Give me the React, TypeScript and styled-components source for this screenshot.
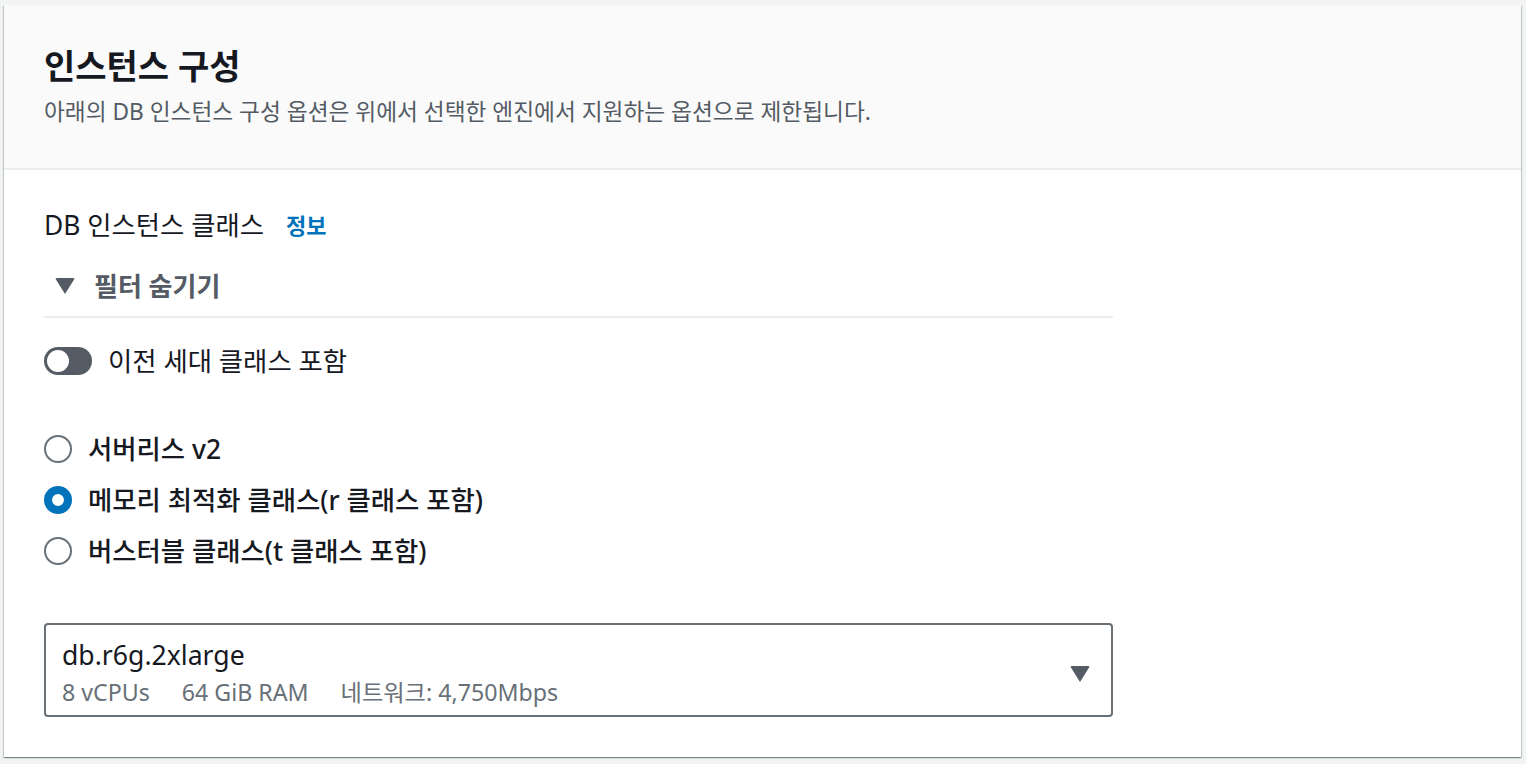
import styled, { createGlobalStyle } from "styled-components";

const GlobalStyle = createGlobalStyle`
  html, body {
    margin: 0;
    padding: 0;
    background: #f2f3f3;
  }
  body {
    font-family: "Noto Sans", "Noto Sans CJK KR", sans-serif;
    color: #16191f;
  }
`;

const Page = styled.div`
  padding: 5px 5px 6px 4px;
`;

const Card = styled.section`
  background: #ffffff;
  box-shadow: 0 1px 1px 0 rgba(0, 28, 36, 0.3), 1px 1px 1px 0 rgba(0, 28, 36, 0.15),
    -1px 1px 1px 0 rgba(0, 28, 36, 0.15);
`;

const Header = styled.header`
  background: #fafafa;
  border-bottom: 2px solid #eaeded;
  padding: 41px 40px 41px;
`;

const Title = styled.h2`
  margin: 0;
  font-size: 34px;
  line-height: 40px;
  font-weight: 700;
  color: #16191f;
`;

const Description = styled.p`
  margin: 11px 0 0;
  font-size: 22.7px;
  line-height: 30px;
  color: #545b64;
`;

const Body = styled.div`
  padding: 40px 40px 40px;
`;

const Column = styled.div`
  width: 1069px;
  display: flex;
  flex-direction: column;
`;

const FieldLabel = styled.div`
  display: flex;
  align-items: center;
  gap: 22px;
  font-size: 26.4px;
  line-height: 30px;
`;

const InfoLink = styled.a`
  color: #0073bb;
  font-weight: 700;
  font-size: 22px;
  text-decoration: none;
`;

const FilterToggle = styled.div`
  margin-top: 31px;
  display: flex;
  align-items: center;
  gap: 19px;
  padding-left: 11px;
  font-size: 26px;
  line-height: 30px;
  font-weight: 700;
  color: #545b64;
`;

const Caret = styled.span<{ $size: number }>`
  width: 0;
  height: 0;
  border-left: ${(p) => p.$size / 2}px solid transparent;
  border-right: ${(p) => p.$size / 2}px solid transparent;
  border-top: ${(p) => p.$size * 0.8}px solid #545b64;
  border-radius: 2px;
  flex: none;
`;

const Divider = styled.hr`
  margin: 15px 0 0;
  border: none;
  border-top: 2px solid #eaeded;
  height: 0;
`;

const ToggleRow = styled.label`
  margin-top: 27px;
  display: flex;
  align-items: center;
  gap: 16px;
  height: 32px;
  font-size: 26.4px;
  line-height: 30px;
`;

const Track = styled.span<{ $on: boolean }>`
  position: relative;
  width: 48px;
  height: 28px;
  border-radius: 14px;
  background: ${(p) => (p.$on ? "#0073bb" : "#545b64")};
  flex: none;
`;

const Knob = styled.span<{ $on: boolean }>`
  position: absolute;
  top: 3px;
  left: ${(p) => (p.$on ? "23px" : "3px")};
  width: 22px;
  height: 22px;
  border-radius: 50%;
  background: #ffffff;
`;

const RadioGroup = styled.div`
  margin-top: 57px;
  display: flex;
  flex-direction: column;
  gap: 21px;
`;

const RadioRow = styled.label`
  display: flex;
  align-items: center;
  gap: 16px;
  height: 30px;
  font-size: 26.4px;
  line-height: 30px;
  font-weight: 500;
`;

const RadioCircle = styled.span<{ $checked: boolean }>`
  box-sizing: border-box;
  width: 28px;
  height: 28px;
  border-radius: 50%;
  flex: none;
  background: #ffffff;
  border: ${(p) => (p.$checked ? "8px solid #0073bb" : "2px solid #687078")};
`;

const Select = styled.div`
  margin-top: 57px;
  border: 2px solid #687078;
  border-radius: 4px;
  padding: 15px 21px 9px 16px;
  display: flex;
  align-items: center;
  justify-content: space-between;
`;

const SelectText = styled.div`
  display: flex;
  flex-direction: column;
  gap: 8px;
`;

const SelectValue = styled.div`
  font-size: 26.6px;
  line-height: 30px;
  color: #16191f;
`;

const SelectMeta = styled.div`
  display: flex;
  gap: 32px;
  font-size: 23.2px;
  line-height: 28px;
  color: #687078;
`;

const SelectCaret = styled.div`
  display: flex;
  padding-top: 2px;
`;

const radios = [
  { label: "서버리스 v2", checked: false },
  { label: "메모리 최적화 클래스(r 클래스 포함)", checked: true },
  { label: "버스터블 클래스(t 클래스 포함)", checked: false },
];

export default function App() {
  return (
    <>
      <GlobalStyle />
      <Page>
        <Card>
          <Header>
            <Title>인스턴스 구성</Title>
            <Description>
              아래의 DB 인스턴스 구성 옵션은 위에서 선택한 엔진에서 지원하는 옵션으로 제한됩니다.
            </Description>
          </Header>
          <Body>
            <Column>
              <FieldLabel>
                DB 인스턴스 클래스
                <InfoLink href="#">정보</InfoLink>
              </FieldLabel>
              <FilterToggle>
                <Caret $size={20} />
                필터 숨기기
              </FilterToggle>
              <Divider />
              <ToggleRow>
                <Track $on={false}>
                  <Knob $on={false} />
                </Track>
                이전 세대 클래스 포함
              </ToggleRow>
              <RadioGroup>
                {radios.map((r) => (
                  <RadioRow key={r.label}>
                    <RadioCircle $checked={r.checked} />
                    {r.label}
                  </RadioRow>
                ))}
              </RadioGroup>
              <Select>
                <SelectText>
                  <SelectValue>db.r6g.2xlarge</SelectValue>
                  <SelectMeta>
                    <span>8 vCPUs</span>
                    <span>64 GiB RAM</span>
                    <span>네트워크: 4,750Mbps</span>
                  </SelectMeta>
                </SelectText>
                <SelectCaret>
                  <Caret $size={20} />
                </SelectCaret>
              </Select>
            </Column>
          </Body>
        </Card>
      </Page>
    </>
  );
}
